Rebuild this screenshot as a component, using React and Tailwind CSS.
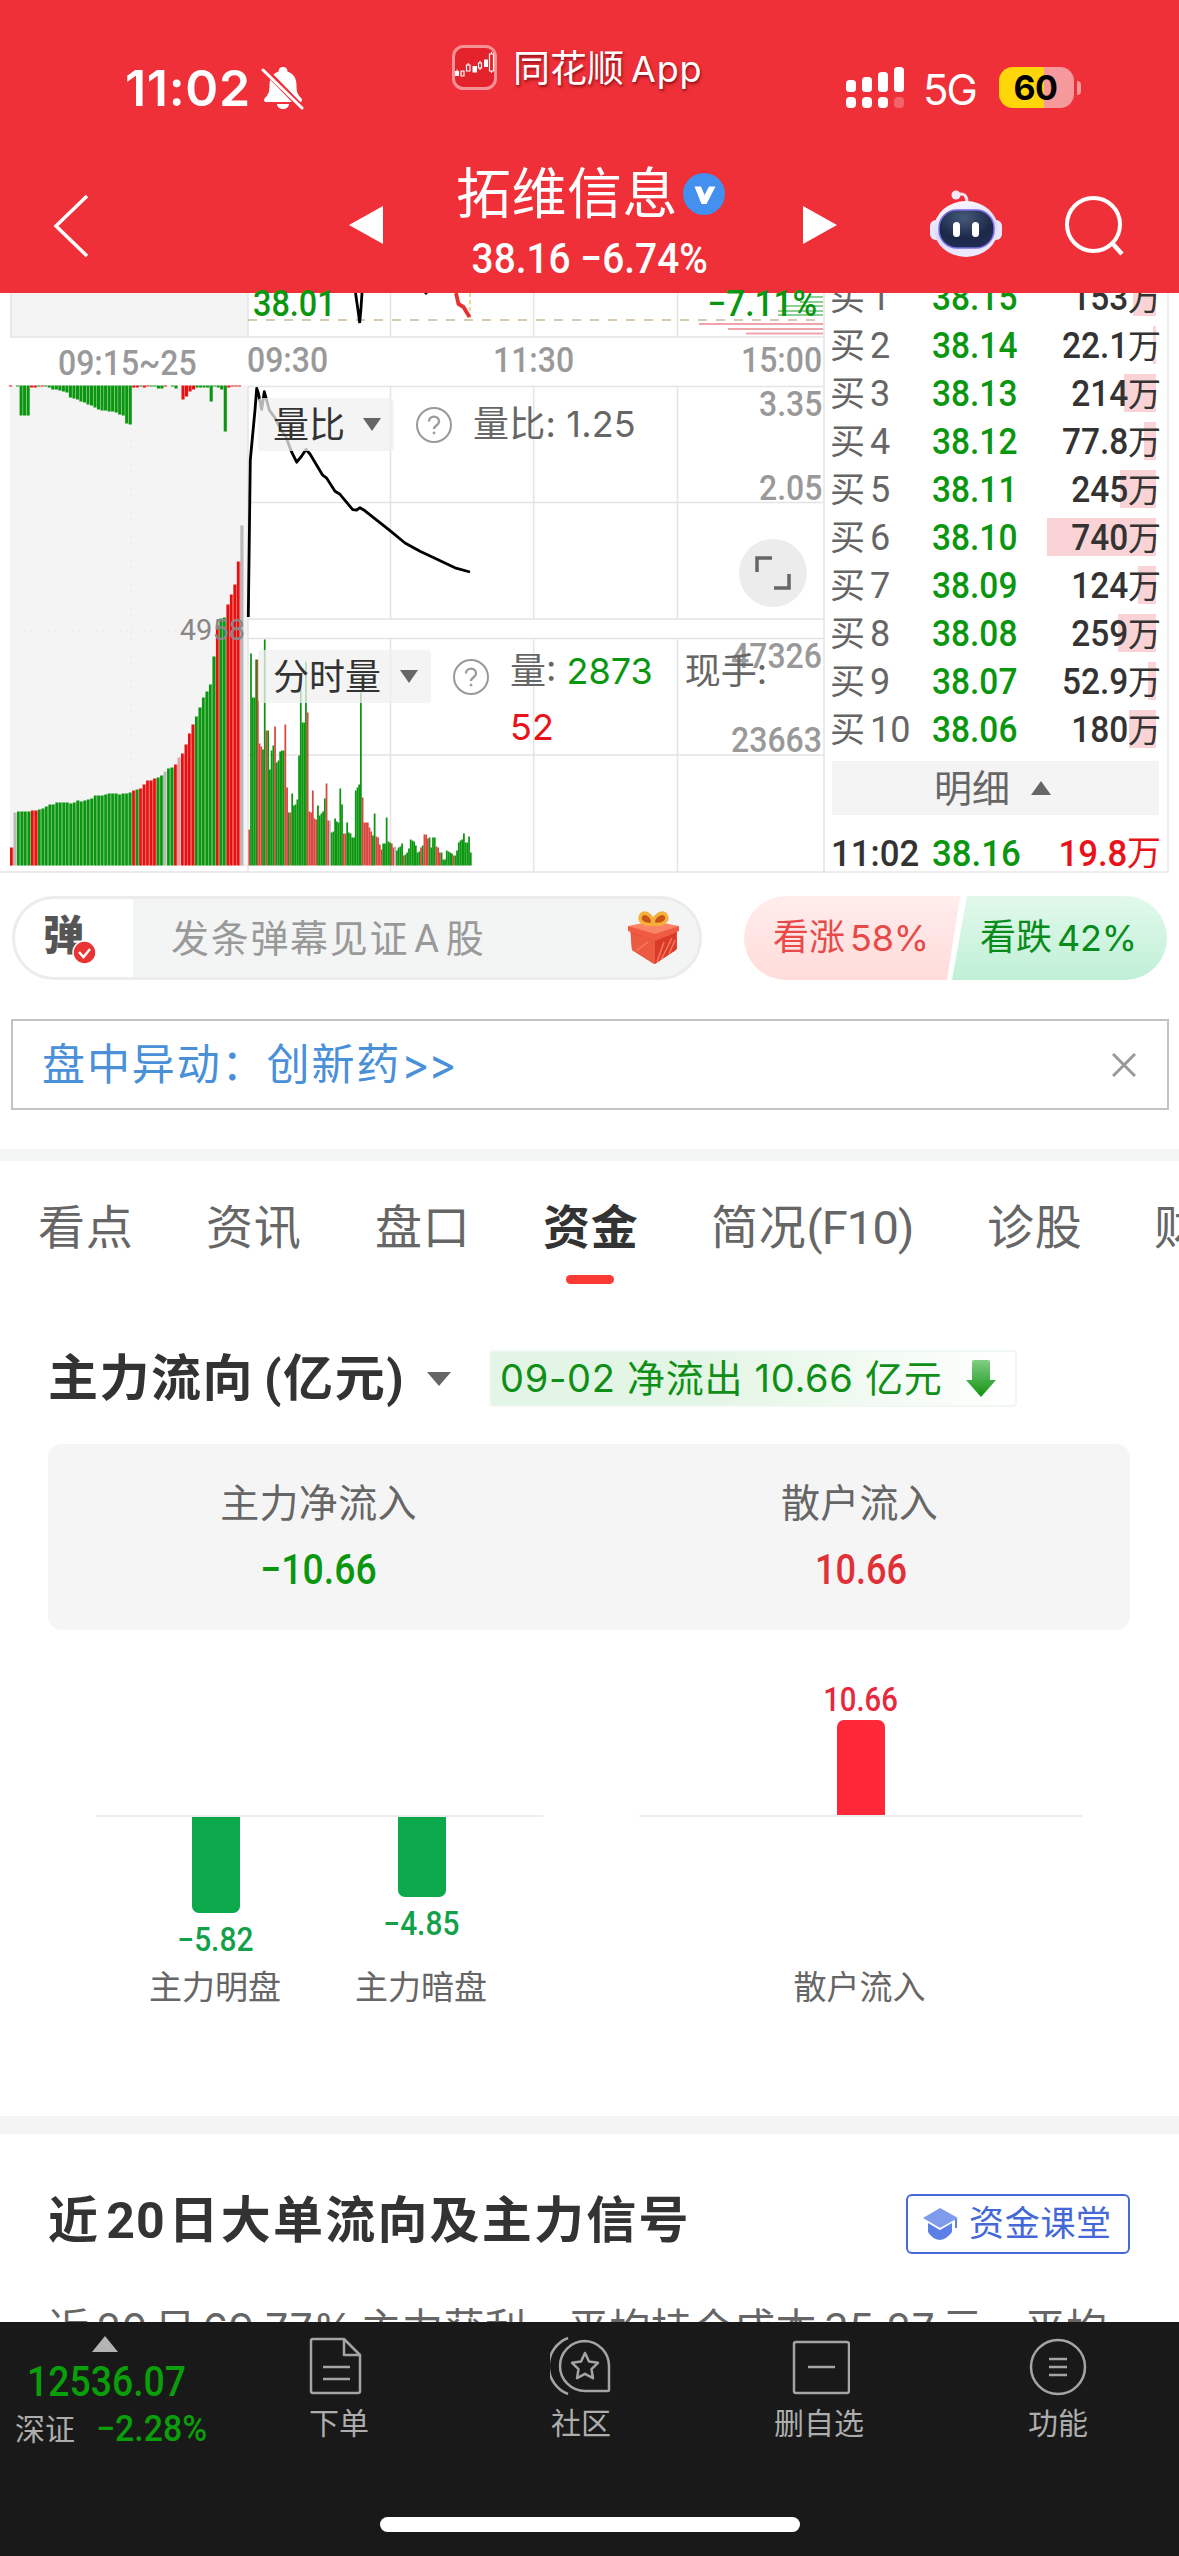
import React from "react";

const SANS = "font-['Roboto','Noto_Sans_CJK_SC',sans-serif]";
const IOS = "font-['Inter','Noto_Sans_CJK_SC',sans-serif]";

const GREEN = "#0a960f";
const GRAY = "#b9b9b9";
const tone = { g: GREEN, r: "#e90f0f", n: GRAY, p: "#e8a0a4" };

/* ---------- chart data ---------- */

const BASE = 865.5;

// call auction matched volume: [height, tone]
const auction = [
  [18, "r"], [53, "n"], [54, "g"], [54, "g"], [54, "g"], [54, "g"], [55, "r"], [55, "r"], [56, "g"], [57, "g"],
  [59, "g"], [61, "g"], [61, "g"], [63, "g"], [63, "g"], [63, "g"], [63, "g"], [62, "g"], [63, "g"], [65, "g"],
  [64, "g"], [65, "g"], [66, "g"], [67, "g"], [70, "g"], [70, "g"], [70, "g"], [71, "g"], [72, "g"], [72, "g"],
  [72, "g"], [71, "g"], [72, "g"], [72, "g"], [73, "g"], [75, "r"], [76, "g"], [77, "r"], [81, "r"], [85, "r"],
  [85, "r"], [87, "r"], [88, "g"], [90, "g"], [94, "n"], [97, "g"], [98, "g"], [101, "r"], [108, "p"], [112, "r"],
  [121, "r"], [132, "r"], [141, "r"], [149, "g"], [158, "g"], [168, "g"], [174, "g"], [181, "g"], [209, "g"], [240, "r"],
  [247, "g"], [248, "g"], [261, "r"], [271, "r"], [281, "r"], [304, "r"], [340, "n"],
];

// call auction unmatched volume hanging from the top: [height, tone]
const unmatched = [
  [1, "r"], [0, "g"], [1, "g"], [30, "g"], [30, "g"], [30, "g"], [2, "r"], [2, "r"], [1, "g"], [1, "r"],
  [1, "g"], [2, "g"], [4, "g"], [4, "g"], [5, "g"], [6, "g"], [7, "g"], [12, "g"], [13, "g"], [14, "g"],
  [16, "g"], [17, "g"], [19, "g"], [20, "g"], [22, "g"], [24, "g"], [25, "g"], [25, "g"], [26, "g"], [26, "g"],
  [27, "g"], [29, "g"], [30, "g"], [38, "g"], [39, "g"], [2, "r"], [2, "r"], [1, "g"], [2, "r"], [1, "r"],
  [1, "g"], [1, "g"], [3, "g"], [3, "g"], [1, "r"], [0, "g"], [1, "g"], [3, "g"], [0, "g"], [14, "r"],
  [11, "r"], [6, "r"], [4, "r"], [2, "g"], [2, "g"], [2, "g"], [2, "g"], [16, "g"], [1, "g"], [2, "g"],
  [4, "g"], [46, "g"], [2, "r"], [1, "r"], [1, "r"], [1, "r"], [0, "g"],
];

// minute volume
const minute = [
  36, 212, 168, 168, 206, 206, 122, 119, 116, 226, 135, 135, 96, 115, 120, 139, 103, 105, 114, 115, 115, 141, 78, 53,
  53, 72, 60, 61, 66, 110, 176, 143, 143, 204, 153, 54, 53, 75, 47, 46, 60, 50, 52, 54, 67, 82, 45, 45, 33, 34, 47, 44,
  43, 77, 61, 32, 32, 43, 33, 32, 28, 28, 75, 78, 81, 173, 68, 43, 43, 43, 38, 34, 30, 52, 29, 28, 21, 16, 22, 22, 48,
  24, 23, 22, 18, 19, 15, 18, 19, 22, 10, 11, 13, 17, 26, 25, 24, 20, 13, 14, 18, 20, 31, 31, 27, 28, 18, 28, 28, 19,
  18, 13, 13, 6, 6, 15, 14, 13, 12, 10, 10, 15, 23, 25, 26, 32, 23, 23, 29, 13,
];
const minuteTone =
  "rggggrrrggrggggrggggg" + "rrgrgggggggggrrrrrrggg" + "ggrrngggggggrrgggggg" + "gggrrrrrrggrrrrgggggrrn" + "ggggrgggggggggrgrrrgg" + "ggrrrgggggggrggggg";

const ratioLine =
  "248.3,617 250.3,460 255,410 256.7,388.3 258.3,393 261.7,409.4 264.3,391.7 269.3,410 275,417.8 281.7,431 286,437 291.7,452.2 296.7,462.2 301.7,456 306,449.5 310,454 322.7,475.2 326.7,478.2 335,491.2 340,494.3 352.7,509.6 356.7,510 360,507.7 365,510.8 390,530.7 405,543 420,551.3 433.3,557.5 455,567.8 470,572";

function IntradayPlot() {
  return (
    <svg className="block h-[580px] w-[832px]" viewBox="0 293 832 580">
      <rect x="10" y="293" width="238" height="43" fill="#f4f4f4" />
      <rect x="10" y="385" width="238" height="481" fill="#f4f4f4" />
      <g stroke="#e4e4e4" strokeWidth="1.5" fill="none">
        <path d="M10 337H824M248 386.5H824M248 502.5H824M248 619H824M248 638.5H824M248 755H824M0 872H832" />
        <path d="M390.5 293V337M533.7 293V337M677.5 293V337M390.5 387V619M533.7 387V619M677.5 387V619M390.5 639V872M533.7 639V872M677.5 639V872M248 293V337M248 387V872M824 293V872" />
        <path d="M131 386V865M12 631H248" strokeDasharray="2 4" stroke="#ececec" />
        <path d="M11 293V337" />
      </g>
      <path d="M248 320H824" stroke="#c9b79a" strokeWidth="1.3" strokeDasharray="9 9" />
      <path d="M470 293V318" stroke="#e5b94c" strokeWidth="1.2" strokeDasharray="4 3" />
      <path d="M355.5 293L358 310L359.7 323L361 308L362 293M425 292l2 2" stroke="#000" strokeWidth="2.8" fill="none" />
      <path d="M456 293L458.5 304L463.5 307L469.5 317" stroke="#e8302f" strokeWidth="3.8" fill="none" />
      <g strokeWidth="1.8">
        <path d="M808 297H823M800 302H823M785 306H823M778 311H823M778 315H823" stroke="#8fce93" />
        <path d="M699 324H823M728 329H823M746 333.5H823" stroke="#f0a3a8" />
      </g>
      {auction.map(([h, t], i) => (
        <rect key={i} x={10 + i * 3.49} y={BASE - h} width="2.7" height={h} fill={tone[t]} />
      ))}
      {auction.map(([h, t], i) => (
        <rect key={i} x={12.6 + i * 3.49} y={BASE - h} width="0.9" height={h} fill={tone[t]} opacity="0.55" />
      ))}
      {unmatched.map(([h, t], i) => (
        <rect key={i} x={9 + i * 3.52} y="385.5" width="3.1" height={h} fill={tone[t]} />
      ))}
      {minute.map((h, i) => (
        <rect key={i} x={248.4 + i * 1.717} y={BASE - h} width="1.75" height={h} fill={minuteTone[i] === "r" ? "#d9453f" : minuteTone[i] === "n" ? GRAY : GREEN} />
      ))}
      <polyline points={ratioLine} fill="none" stroke="#000" strokeWidth="2.8" strokeLinejoin="round" />
    </svg>
  );
}

function Help({ className }) {
  return (
    <svg className={className} width="38" height="38" viewBox="0 0 38 38" fill="none" stroke="#999" strokeWidth="2">
      <circle cx="19" cy="19" r="17" />
      <path d="M14 15.5c0-6.500 10-6.500 10 0 0 4-5 4-5 7.500" strokeWidth="2.300" />
      <circle cx="19" cy="27" r="1" fill="#999" strokeWidth="1" />
    </svg>
  );
}

function Selector({ label, className }) {
  return (
    <div className={`absolute flex h-[53px] items-center rounded bg-[#f0f0f0]/75 pl-[15px] text-[36px] leading-none text-[#333] ${className}`}>
      <span className="mt-[2px]">{label}</span>
      <svg className="ml-auto mr-[13px]" width="18" height="13" viewBox="0 0 18 13"><path d="M0 0H18L9 13Z" fill="#666" /></svg>
    </div>
  );
}

function AxisLabel({ children, className }) {
  return <span className={`absolute scale-x-[0.9] text-[35.5px] leading-[36px] font-medium text-[#999] ${className}`}>{children}</span>;
}

function StatusBar() {
  return (
    <div className={`flex h-[130px] items-start ${IOS}`}>
      <span className="ml-[125px] mt-[63px] w-[130px] whitespace-nowrap text-[50px] font-semibold leading-[50px] tracking-[0.700px]">11:02</span>
      <svg className="ml-[6px] mt-[66px]" width="44" height="44" viewBox="0 0 44 44">
        <path d="M22 1c3 0 4.500 2 4.500 4.500 6 2 9 7 9 13.500 0 9 2 10 5 13.500 1 1.500.5 3.500-1.500 3.500H5c-2 0-2.500-2-1.500-3.500 3-3.500 5-4.500 5-13.500 0-6.500 3-11.500 9-13.500C17.500 3 19 1 22 1zM16 38h12c0 3-3 5-6 5s-6-2-6-5z" fill="#fff" />
        <path d="M4 4L41 42" stroke="#ef3038" strokeWidth="6" />
        <path d="M2 4L41 42" stroke="#fff" strokeWidth="3" strokeLinecap="round" />
      </svg>
      <svg className="ml-[147px] mt-[45px]" width="45" height="45" viewBox="0 0 45 45">
        <rect x="1.500" y="1.500" width="42" height="42" rx="10" fill="#e3222b" stroke="#f79297" strokeWidth="3" />
        <g fill="none" stroke="#fff" strokeWidth="1.200">
          <path d="M9 26h3v5H9zM14.500 20h3.500v6h-3.500zM16.200 18v2M26.500 18h3v5h-3zM28 16v2M28 23v2M37.500 9h4v17h-4zM39.500 7v2M39.500 26v2" />
        </g>
        <path d="M3 26h4v5H3zM20.500 21h4.500v6.500h-4.500zM32 14.500h4V22h-4zM4.500 24.500h1v2h-1z" fill="#fff" />
      </svg>
      <span className="ml-[16px] mt-[47px] w-[190px] whitespace-nowrap text-[37px] leading-[44px] [text-shadow:1px_2px_3px_#8a1018]">
        同花顺<span className="ml-[7px] text-[36px] tracking-[0.800px]">App</span>
      </span>
      <svg className="ml-[143px] mt-[67px]" width="58" height="42" viewBox="0 0 58 42" fill="#fff">
        <rect x="0" y="13" width="10" height="12" rx="3.500" /><rect x="16" y="10" width="10" height="15" rx="3.500" />
        <rect x="32" y="5" width="10" height="20" rx="3.500" /><rect x="48" y="0" width="10" height="25" rx="3.500" />
        <rect x="0" y="30" width="10" height="11" rx="4" /><rect x="16" y="30" width="10" height="11" rx="4" />
        <rect x="32" y="30" width="10" height="11" rx="4" /><rect x="48" y="30" width="10" height="11" rx="4" opacity=".25" />
      </svg>
      <span className="ml-[19px] mt-[65px] w-[60px] text-[42px] leading-[50px] tracking-[-2px]">5G</span>
      <div className="ml-[16px] mt-[67px] flex h-[41px] w-[75px] items-center justify-center rounded-[14px] bg-linear-to-r from-[#ffd60a] from-60% to-[#f6999d] to-60% pr-[2px] text-[34px] font-bold leading-none tracking-[-0.500px] text-black">
        60
      </div>
      <div className="ml-[3px] mt-[81px] h-[14px] w-[4px] rounded-r-full bg-[#f6999d]" />
    </div>
  );
}

function TitleBar() {
  return (
    <div className="flex h-[163px] items-start">
      <svg className="ml-[53px] mt-[65px]" width="36" height="62" viewBox="0 0 36 62" fill="none" stroke="#fff" strokeWidth="3.500"><path d="M34 1L3 31L34 61" /></svg>
      <svg className="ml-[260px] mt-[76px]" width="34" height="38" viewBox="0 0 34 38"><path d="M34 0V38L0 19Z" fill="#fff" /></svg>
      <div className="flex w-[420px] flex-col items-center">
        <div className="ml-[-5px] mt-[34px] flex items-center gap-[5px]">
          <span className="text-[55px] leading-[60px] tracking-[0.500px]">拓维信息</span>
          <svg width="42" height="42" viewBox="0 0 42 42"><circle cx="21" cy="21" r="21" fill="#4390ee" /><path d="M11.500 13.500H18L21.500 22L26 13.500H32.500L23.500 31H18.500Z" fill="#fff" /></svg>
        </div>
        <div className="ml-[-6px] mt-[13px] scale-x-[0.925] whitespace-nowrap text-[42px] font-medium leading-[44px]">38.16 −6.74%</div>
      </div>
      <svg className="mt-[76px]" width="34" height="38" viewBox="0 0 34 38"><path d="M0 0V38L34 19Z" fill="#fff" /></svg>
      <svg className="ml-[93px] mt-[60px]" width="72" height="68" viewBox="0 0 72 68">
        <defs>
          <linearGradient id="shell" x1="0" y1="0" x2="0.300" y2="1"><stop offset="0" stopColor="#fff" /><stop offset=".6" stopColor="#dcd9fa" /><stop offset="1" stopColor="#eceaff" /></linearGradient>
          <radialGradient id="visor" cx=".45" cy=".2" r=".9"><stop offset="0" stopColor="#46597a" /><stop offset=".6" stopColor="#1c2848" /><stop offset="1" stopColor="#22305a" /></radialGradient>
        </defs>
        <path d="M27 5c7-3 10 1 10 7" fill="none" stroke="#f3e2ee" strokeWidth="3" />
        <circle cx="26" cy="5" r="4.500" fill="#f3eaf5" />
        <rect x="0" y="30" width="14" height="20" rx="6" fill="#e9e7fb" /><rect x="58" y="30" width="14" height="20" rx="6" fill="#e9e7fb" />
        <ellipse cx="36" cy="39" rx="32" ry="28" fill="url(#shell)" />
        <rect x="9" y="20" width="55" height="38" rx="18" fill="url(#visor)" stroke="#7a6be0" strokeWidth="1.500" />
        <rect x="23" y="32" width="7" height="15" rx="3.500" fill="#fff" /><rect x="42" y="32" width="7" height="15" rx="3.500" fill="#fff" />
      </svg>
      <svg className="ml-[62px] mt-[65px]" width="62" height="62" viewBox="0 0 62 62" fill="none" stroke="#fff">
        <circle cx="29.500" cy="29.500" r="26.500" strokeWidth="4" /><path d="M48 48L58 59" strokeWidth="4.500" />
      </svg>
    </div>
  );
}

const book = [
  ["1", "38.15", "153", 23], ["2", "38.14", "22.1", 3], ["3", "38.13", "214", 32], ["4", "38.12", "77.8", 12], ["5", "38.11", "245", 36],
  ["6", "38.10", "740", 109], ["7", "38.09", "124", 18], ["8", "38.08", "259", 38], ["9", "38.07", "52.9", 8], ["10", "38.06", "180", 27],
];

function OrderBook() {
  return (
    <div className="flex h-[580px] w-[337px] flex-col overflow-hidden border-r-2 border-b-2 border-[#eeeeee]">
      <div className="mt-[-20px] flex shrink-0 flex-col">
        {book.map(([n, price, vol, w]) => (
          <div key={n} className="grid h-[48px] grid-cols-[100px_111px_118px] items-center text-[36px] font-medium leading-none">
            <span className="mt-[2px] ml-[-2px] whitespace-nowrap font-normal text-[#666]"><span className="text-[35px]">买</span><span className="ml-[5px]">{n}</span></span>
            <span className="mt-[2px] origin-left scale-x-[0.93] text-[#0a960f]">{price}</span>
            <span className="relative flex h-[38px] items-center justify-end text-[#333]">
              <i className="absolute top-0 right-[5px] h-full bg-[#f9d3d6]" style={{ width: w }} />
              <span className="relative mt-[2px] inline-block origin-right scale-x-[0.93] whitespace-nowrap">{vol}</span>
              <span className="relative mt-[2px] text-[33px] font-normal">万</span>
            </span>
          </div>
        ))}
      </div>
      <div className="mt-[8px] flex h-[54px] w-[327px] shrink-0 items-center bg-[#f4f4f4] text-[38px] leading-none text-[#666]">
        <span className="ml-[102px] mt-[2px]">明细</span>
        <svg className="ml-[21px]" width="20" height="14" viewBox="0 0 20 14"><path d="M10 0L20 14H0Z" fill="#666" /></svg>
      </div>
      <div className="mt-[14px] grid h-[48px] shrink-0 grid-cols-[100px_111px_118px] items-center text-[37px] font-medium leading-none">
        <span className="ml-[-1px] origin-left scale-x-[0.94] text-[#333]">11:02</span>
        <span className="origin-left scale-x-[0.94] text-[#0a960f]">38.16</span>
        <span className="flex items-center justify-end text-[#e8121a]"><span className="inline-block origin-right scale-x-[0.94]">19.8</span><span className="text-[34px] font-normal">万</span></span>
      </div>
    </div>
  );
}

function Market() {
  return (
    <section className="flex h-[580px] shrink-0 bg-white">
      <div className="relative w-[832px] shrink-0">
        <IntradayPlot />
        <span className="absolute left-[253px] top-[-7px] origin-left scale-x-[0.9] text-[36px] font-medium leading-[36px] text-[#0a960f]">38.01</span>
        <span className="absolute right-[15px] top-[-7px] origin-right scale-x-[0.93] text-[36px] font-medium leading-[36px] text-[#0a960f]">−7.11%</span>
        <AxisLabel className="left-[58px] top-[52px] origin-left">09:15~25</AxisLabel>
        <AxisLabel className="left-[247px] top-[49px] origin-left">09:30</AxisLabel>
        <AxisLabel className="left-[493px] top-[49px] origin-left">11:30</AxisLabel>
        <AxisLabel className="right-[10px] top-[49px] origin-right">15:00</AxisLabel>
        <AxisLabel className="right-[10px] top-[93px] origin-right">3.35</AxisLabel>
        <AxisLabel className="right-[10px] top-[177px] origin-right">2.05</AxisLabel>
        <AxisLabel className="right-[10px] top-[345px] origin-right">47326</AxisLabel>
        <AxisLabel className="right-[10px] top-[429px] origin-right">23663</AxisLabel>
        <span className="absolute right-[587px] top-[320px] text-[29px] leading-[34px] text-[#888]">4958</span>
        <Selector label="量比" className="left-[258px] top-[105px] w-[136px]" />
        <Help className="absolute left-[415px] top-[113px]" />
        <div className={`absolute left-[473px] top-[109px] whitespace-pre text-[36px] leading-[44px] tracking-[0.200px] text-[#666] ${IOS}`}>量比: 1.25</div>
        <Selector label="分时量" className="left-[258px] top-[357px] w-[173px]" />
        <Help className="absolute left-[452px] top-[365px]" />
        <div className={`absolute left-[510px] top-[350px] w-[270px] text-[36px] leading-[56px] text-[#666] ${IOS}`}>
          <span>量: </span><span className="text-[#0a960f]">2873</span>
          <span className="ml-[32px]">现手:</span>
          <div className="text-[#e8121a]">52</div>
        </div>
        <div className="absolute left-[739px] top-[246px] flex size-[68px] items-center justify-center rounded-full bg-[#ececec]">
          <svg width="36" height="36" viewBox="0 0 36 36" fill="none" stroke="#666" strokeWidth="3.500"><path d="M2 17V3H17M34 19V33H19" /></svg>
        </div>
      </div>
      <OrderBook />
    </section>
  );
}

function Danmu() {
  return (
    <div className="mt-[23px] flex h-[84px] shrink-0 items-center pl-[12px]">
      <div className="flex h-[84px] w-[690px] items-center overflow-hidden rounded-full border-[3px] border-[#ebeceb] bg-[#f3f4f4]">
        <div className="flex h-full w-[118px] shrink-0 items-center bg-white pl-[28px]">
          <div className="relative mt-[-3px] text-[41px] font-black leading-none text-[#555]">
            弹
            <svg className="absolute left-[29px] top-[24px]" width="25" height="25" viewBox="0 0 25 25"><circle cx="12.500" cy="12.500" r="11.500" fill="#e93434" stroke="#fff" strokeWidth="1.500" /><path d="M7 12l4.500 5L18 9" stroke="#fff" strokeWidth="2.500" fill="none" /></svg>
          </div>
        </div>
        <span className="ml-[38px] mt-[2px] whitespace-nowrap text-[38px] leading-none tracking-[1.700px] text-[#999]">发条弹幕见证<span className="mx-[5px]">A</span>股</span>
        <svg className="ml-auto mr-[20px]" width="51" height="56" viewBox="0 0 51 56">
          <path d="M2 17L26 12L49 17V39L26 54L4 40Z" fill="#e44a35" />
          <path d="M0 16L25 11L51 16L27 27Z" fill="#f98468" />
          <path d="M0 16L27 24L51 16V21L27 31L0 21Z" fill="#f15b42" />
          <path d="M27 31V54L4 40L3 23Z" fill="#ec5a42" /><path d="M27 31L48 23V40L27 54Z" fill="#d93a29" />
          <path d="M33 50L44 28M29 52L36 32M41 44L47 30M8 41L20 32" stroke="#fa7a5c" strokeWidth="1.500" />
          <path d="M25 14C14 16 9 9 14 4C19 1 25 7 25 14C25 7 32 1 37 4C42 9 37 16 25 14Z" fill="#c9541a" stroke="#f5b03a" strokeWidth="3.500" />
        </svg>
      </div>
      <div className="ml-[42px] flex h-[84px] w-[423px] items-center rounded-full text-[36px] leading-none">
        <div className="flex h-full w-[216px] shrink-0 items-center rounded-l-full bg-linear-to-b from-[#ffedec] to-[#ffdcda] pl-[29px] whitespace-nowrap text-[#e84a4a] [clip-path:polygon(0_0,100%_0,94%_100%,0_100%)]">
          看涨<span className={`ml-[5px] tracking-[-0.200px] ${IOS}`}>58%</span>
        </div>
        <div className="-ml-[8px] flex h-full w-[215px] shrink-0 items-center rounded-r-full bg-linear-to-b from-[#e2f9ec] to-[#bff0d6] pl-[28px] whitespace-nowrap text-[#0a8c1c] [clip-path:polygon(7%_0,100%_0,100%_100%,0_100%)]">
          看跌<span className={`ml-[5px] tracking-[-0.200px] ${IOS}`}>42%</span>
        </div>
      </div>
    </div>
  );
}

function Notice() {
  return (
    <div className="mx-[11px] mt-[39px] flex h-[91px] w-[1158px] shrink-0 items-center border-2 border-[#c2c4c4] pl-[29px] pr-[31px]">
      <span className="mt-[1px] whitespace-nowrap text-[43px] leading-none tracking-[1.900px] text-[#4a90d9]">盘中异动：创新药<span className={`tracking-[-1.500px] ${IOS}`}>&gt;&gt;</span></span>
      <svg className="ml-auto" width="24" height="24" viewBox="0 0 24 24" stroke="#999" strokeWidth="3"><path d="M1 1L23 23M23 1L1 23" /></svg>
    </div>
  );
}

function Tabs() {
  return (
    <nav className="flex h-[125px] shrink-0 overflow-hidden whitespace-nowrap pl-[38px] pt-[39px] text-[47px] leading-[56px] tracking-[0.700px] text-[#666]">
      <span className="w-[168px] shrink-0">看点</span>
      <span className="w-[169px] shrink-0">资讯</span>
      <span className="w-[168px] shrink-0">盘口</span>
      <span className="flex w-[168px] shrink-0 flex-col font-bold text-[#333]">
        资金
        <i className="ml-[23px] mt-[19px] h-[9px] w-[48px] rounded-full bg-[#fb3a35]" />
      </span>
      <span className="w-[276px] shrink-0">简况<span className="tracking-[-0.800px]">(F10)</span></span>
      <span className="w-[167px] shrink-0">诊股</span>
      <span className="shrink-0">财务</span>
    </nav>
  );
}

function FlowTitle() {
  return (
    <div className="mt-[64px] flex h-[57px] shrink-0 items-center pl-[48px]">
      <h2 className="mt-[1px] w-[356px] whitespace-nowrap text-[50px] font-bold leading-none tracking-[1.500px] text-[#333]">主力流向<span className="ml-[10px] tracking-[1.600px]">(亿元)</span></h2>
      <svg className="ml-[23px]" width="24" height="14" viewBox="0 0 24 14"><path d="M0 0H24L12 14Z" fill="#666" /></svg>
      <div className="ml-[38px] flex h-[57px] w-[528px] items-center rounded border-2 border-[#f0f8f1] bg-linear-to-r from-[#e3f5e4] from-40% to-white pl-[9px] pr-[19px]">
        <span className={`mt-[-2px] whitespace-nowrap text-[38px] leading-none tracking-[0.700px] text-[#0f8f18] ${IOS}`}>09-02 净流出 10.66 亿元</span>
        <svg className="ml-auto" width="30" height="37" viewBox="0 0 30 37">
          <defs><linearGradient id="down" x1="0" y1="0" x2="0" y2="1"><stop offset="0" stopColor="#83ce86" /><stop offset="1" stopColor="#0f920f" /></linearGradient></defs>
          <path d="M8 0H22Q24 0 24 2V20H30L15 37L0 20H6V2Q6 0 8 0Z" fill="url(#down)" />
        </svg>
      </div>
    </div>
  );
}

function Summary() {
  return (
    <div className="mx-[48px] mt-[37px] grid h-[186px] w-[1082px] shrink-0 grid-cols-2 rounded-[14px] bg-[#f5f5f5] pt-[37px] text-center">
      <div>
        <div className="text-[39px] leading-[46px] tracking-[0.300px] text-[#666]">主力净流入</div>
        <div className="mt-[21px] scale-x-[0.89] text-[42px] font-medium leading-[44px] text-[#0a960f]">−10.66</div>
      </div>
      <div>
        <div className="text-[39px] leading-[46px] tracking-[0.300px] text-[#666]">散户流入</div>
        <div className="ml-[3px] mt-[21px] scale-x-[0.86] text-[42px] font-medium leading-[44px] text-[#e03038]">10.66</div>
      </div>
    </div>
  );
}

function Column({ value, label, height, className }) {
  return (
    <div className={`flex shrink-0 flex-col items-center ${className}`}>
      <div className="w-[48px] rounded-b-[7px] bg-[#0ba84c]" style={{ height }} />
      <span className="mt-[11px] mr-[2px] scale-x-[0.92] whitespace-nowrap text-[32.5px] font-medium leading-[32px] text-[#12a04b]">{value}</span>
      <span className="mt-auto mr-[2px] whitespace-nowrap text-[33px] leading-[40px] text-[#666]">{label}</span>
    </div>
  );
}

function FlowChart() {
  return (
    <div className="flex h-[486px] shrink-0 pl-[96px]">
      <div className="mt-[185px] flex h-[193px] w-[447px] border-t-2 border-[#ededed]">
        <Column value="−5.82" label="主力明盘" height={96} className="ml-[50px] w-[140px]" />
        <Column value="−4.85" label="主力暗盘" height={80} className="ml-[66px] w-[140px]" />
      </div>
      <div className="ml-[96px] flex w-[443px] flex-col items-center">
        <span className="mt-[54px] scale-x-[0.9] text-[32.5px] font-medium leading-[32px] text-[#e8283c]">10.66</span>
        <div className="mt-[4px] h-[95px] w-[48px] rounded-t-[7px] bg-[#ff2838]" />
        <div className="h-[2px] w-full bg-[#ededed]" />
        <span className="mt-[151px] mr-[2px] text-[33px] leading-[40px] text-[#666]">散户流入</span>
      </div>
    </div>
  );
}

function Signals() {
  return (
    <section className="h-[188px] shrink-0 overflow-hidden pl-[48px]">
      <div className="mt-[60px] flex h-[60px] w-[1082px] items-center justify-between">
        <h2 className="mt-[-7px] whitespace-nowrap text-[50px] font-bold leading-none tracking-[2.200px] text-[#333]">近<span className="ml-[6px] mr-[3px] tracking-[1px]">20</span>日大单流向及主力信号</h2>
        <div className="flex h-[60px] w-[224px] items-center rounded-[6px] border-2 border-[#4669d6] pl-[15px] text-[35px] leading-none text-[#4468d8]">
          <svg width="36" height="32" viewBox="0 0 36 32"><path d="M17 0L35 10L17 20L0 10Z" fill="#7f9cec" /><path d="M5 15L17 22L29 15V24Q24 31 17 32Q9 31 5 24Z" fill="#5d80e6" /><path d="M33 11V20" stroke="#5d80e6" strokeWidth="2" /></svg>
          <span className="ml-[10px] mt-[1px] whitespace-nowrap tracking-[0.700px]">资金课堂</span>
        </div>
      </div>
      <p className={`mt-[46px] whitespace-nowrap text-[41px] leading-[56px] tracking-[0.500px] [word-spacing:-5.500px] text-[#666] ${IOS}`}>近 20 日 69.77% 主力获利，平均持仓成本 35.27 元，平均</p>
    </section>
  );
}

function Item({ label, children, className }) {
  return (
    <div className={`flex shrink-0 flex-col items-center ${className}`}>
      <svg width="62" height="60" viewBox="0 0 62 60" fill="none" stroke="#a4a4a4" strokeWidth="2.500" strokeLinejoin="round">{children}</svg>
      <span className="mt-[10px] whitespace-nowrap text-[30px] leading-[36px] text-[#adadad]">{label}</span>
    </div>
  );
}

function BottomBar() {
  return (
    <footer className="h-[234px] shrink-0 bg-[#191919]">
      <div className="flex h-[195px] pt-[14px]">
        <div className="w-[230px] shrink-0">
          <svg className="ml-[92px] block" width="26" height="16" viewBox="0 0 26 16"><path d="M13 0L26 16H0Z" fill="#b4b4b4" /></svg>
          <div className="ml-[27px] mt-[8px] origin-left scale-x-[0.89] text-[42px] font-medium leading-[44px] text-[#0a9e0a]">12536.07</div>
          <div className="ml-[15px] mt-[8px] flex h-[34px] items-center whitespace-nowrap leading-none">
            <span className="mt-[2px] text-[30px] text-[#adadad]">深证</span>
            <span className="ml-[21px] origin-left scale-x-[0.94] text-[36px] font-medium text-[#0a9e0a]">−2.28%</span>
          </div>
        </div>
        <Item label="下单" className="ml-[59px] w-[100px]">
          <path d="M5 3H36L52 19V55Q52 57 50 57H5Q3 57 3 55V5Q3 3 5 3ZM36 3V19H52M15 31H42M15 43H42" />
        </Item>
        <Item label="社区" className="ml-[142px] w-[100px]">
          <path d="M35 5A25 25 0 1 0 35 55H58Q59 55 59 54V30A25 25 0 0 0 35 5ZM18 2A30 30 0 0 0 18 58" />
          <path d="M35 17l4 8.500 9 1.300-6.500 6.400 1.500 9-8-4.400-8 4.400 1.500-9-6.500-6.400 9-1.300z" />
        </Item>
        <Item label="删自选" className="ml-[138px] w-[100px]">
          <rect x="6" y="6" width="55" height="51" rx="2" /><path d="M20 31H47" />
        </Item>
        <Item label="功能" className="ml-[139px] w-[100px]">
          <circle cx="31" cy="31" r="27" /><path d="M22 23H40M22 31H40M22 39H40" />
        </Item>
      </div>
      <div className="mx-auto h-[15px] w-[420px] rounded-full bg-white" />
    </footer>
  );
}

export default function App() {
  return (
    <main className={`flex h-[2556px] w-[1179px] flex-col overflow-hidden bg-white ${SANS}`}>
      <header className="h-[293px] shrink-0 bg-[#ef3038] text-white">
        <StatusBar />
        <TitleBar />
      </header>
      <Market />
      <Danmu />
      <Notice />
      <div className="mt-[39px] h-[12px] shrink-0 bg-[#f4f5f5]" />
      <Tabs />
      <FlowTitle />
      <Summary />
      <FlowChart />
      <div className="h-[18px] shrink-0 bg-[#f4f4f4]" />
      <Signals />
      <BottomBar />
    </main>
  );
}
